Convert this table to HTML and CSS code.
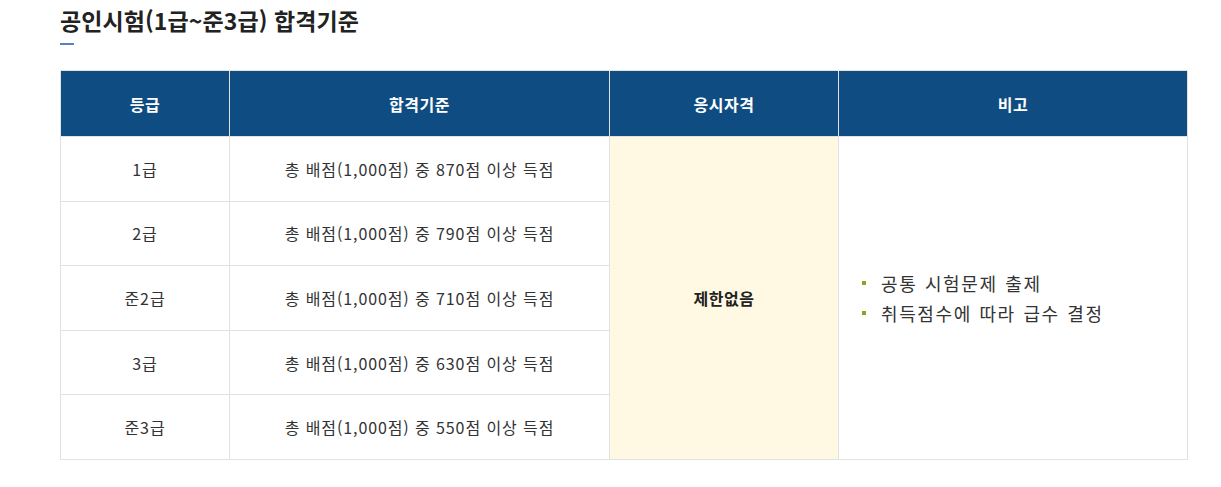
FILE: index.html
```html
<!DOCTYPE html>
<html lang="ko">
<head>
<meta charset="utf-8">
<title>공인시험 합격기준</title>
<link rel="stylesheet" href="styles.css">
</head>
<body>
<div class="page">
  <h2 class="title">공인시험(1급~준3급) 합격기준</h2>
  <span class="title-bar"></span>
  <table class="grade-table">
    <colgroup>
      <col class="c1"><col class="c2"><col class="c3"><col class="c4">
    </colgroup>
    <thead>
      <tr><th>등급</th><th>합격기준</th><th>응시자격</th><th>비고</th></tr>
    </thead>
    <tbody>
      <tr>
        <td>1급</td>
        <td>총 배점(1,000점) 중 870점 이상 득점</td>
        <td rowspan="5" class="qual">제한없음</td>
        <td rowspan="5" class="note">
          <ul class="note-list">
            <li>공통 시험문제 출제</li>
            <li>취득점수에 따라 급수 결정</li>
          </ul>
        </td>
      </tr>
      <tr><td>2급</td><td>총 배점(1,000점) 중 790점 이상 득점</td></tr>
      <tr><td>준2급</td><td>총 배점(1,000점) 중 710점 이상 득점</td></tr>
      <tr><td>3급</td><td>총 배점(1,000점) 중 630점 이상 득점</td></tr>
      <tr><td>준3급</td><td>총 배점(1,000점) 중 550점 이상 득점</td></tr>
    </tbody>
  </table>
</div>
</body>
</html>
```
FILE: styles.css
```css
html, body { margin: 0; padding: 0; background: #fff; }
body {
  font-family: "Noto Sans CJK KR", "Noto Sans", sans-serif;
  color: #222;
}
.page { padding: 4px 0 0 60px; }
.title {
  margin: 0;
  font-size: 23px;
  line-height: 32px;
  font-weight: 700;
  color: #222;
  letter-spacing: 0.1px;
}
.title-bar {
  display: block;
  width: 14px;
  height: 2px;
  background: #5a7fc4;
  margin-top: 7px;
}
.grade-table {
  margin-top: 25px;
  width: 1128px;
  border-collapse: collapse;
  table-layout: fixed;
  border: 1px solid #e2e2e2;
}
.c1 { width: 169px; }
.c2 { width: 380px; }
.c3 { width: 229px; }
.c4 { width: 349px; }
.grade-table th {
  background: #0f4c81;
  color: #fff;
  font-size: 16px;
  letter-spacing: 0.5px;
  font-weight: 700;
  height: 65px;
  padding: 0;
  border: 1px solid #e2e2e2;
  border-top: 0;
}
.grade-table td {
  height: 63.6px;
  padding: 0;
  text-align: center;
  font-size: 16px;
  letter-spacing: 0.9px;
  color: #333;
  border: 1px solid #e2e2e2;
}
.grade-table td.qual {
  background: #fff9e3;
  font-weight: 700;
  letter-spacing: 0.5px;
  color: #222;
}
.grade-table td.note { text-align: left; }
.note-list {
  list-style: none;
  margin: 0;
  padding: 0 0 0 23px;
}
.note-list li {
  position: relative;
  padding-left: 19px;
  font-size: 18px;
  letter-spacing: 1.6px;
  word-spacing: 1px;
  line-height: 30px;
  color: #333;
}
.note-list li::before {
  content: "";
  position: absolute;
  left: 0;
  top: 13px;
  width: 4px;
  height: 4px;
  background: #7fa91f;
}
```
